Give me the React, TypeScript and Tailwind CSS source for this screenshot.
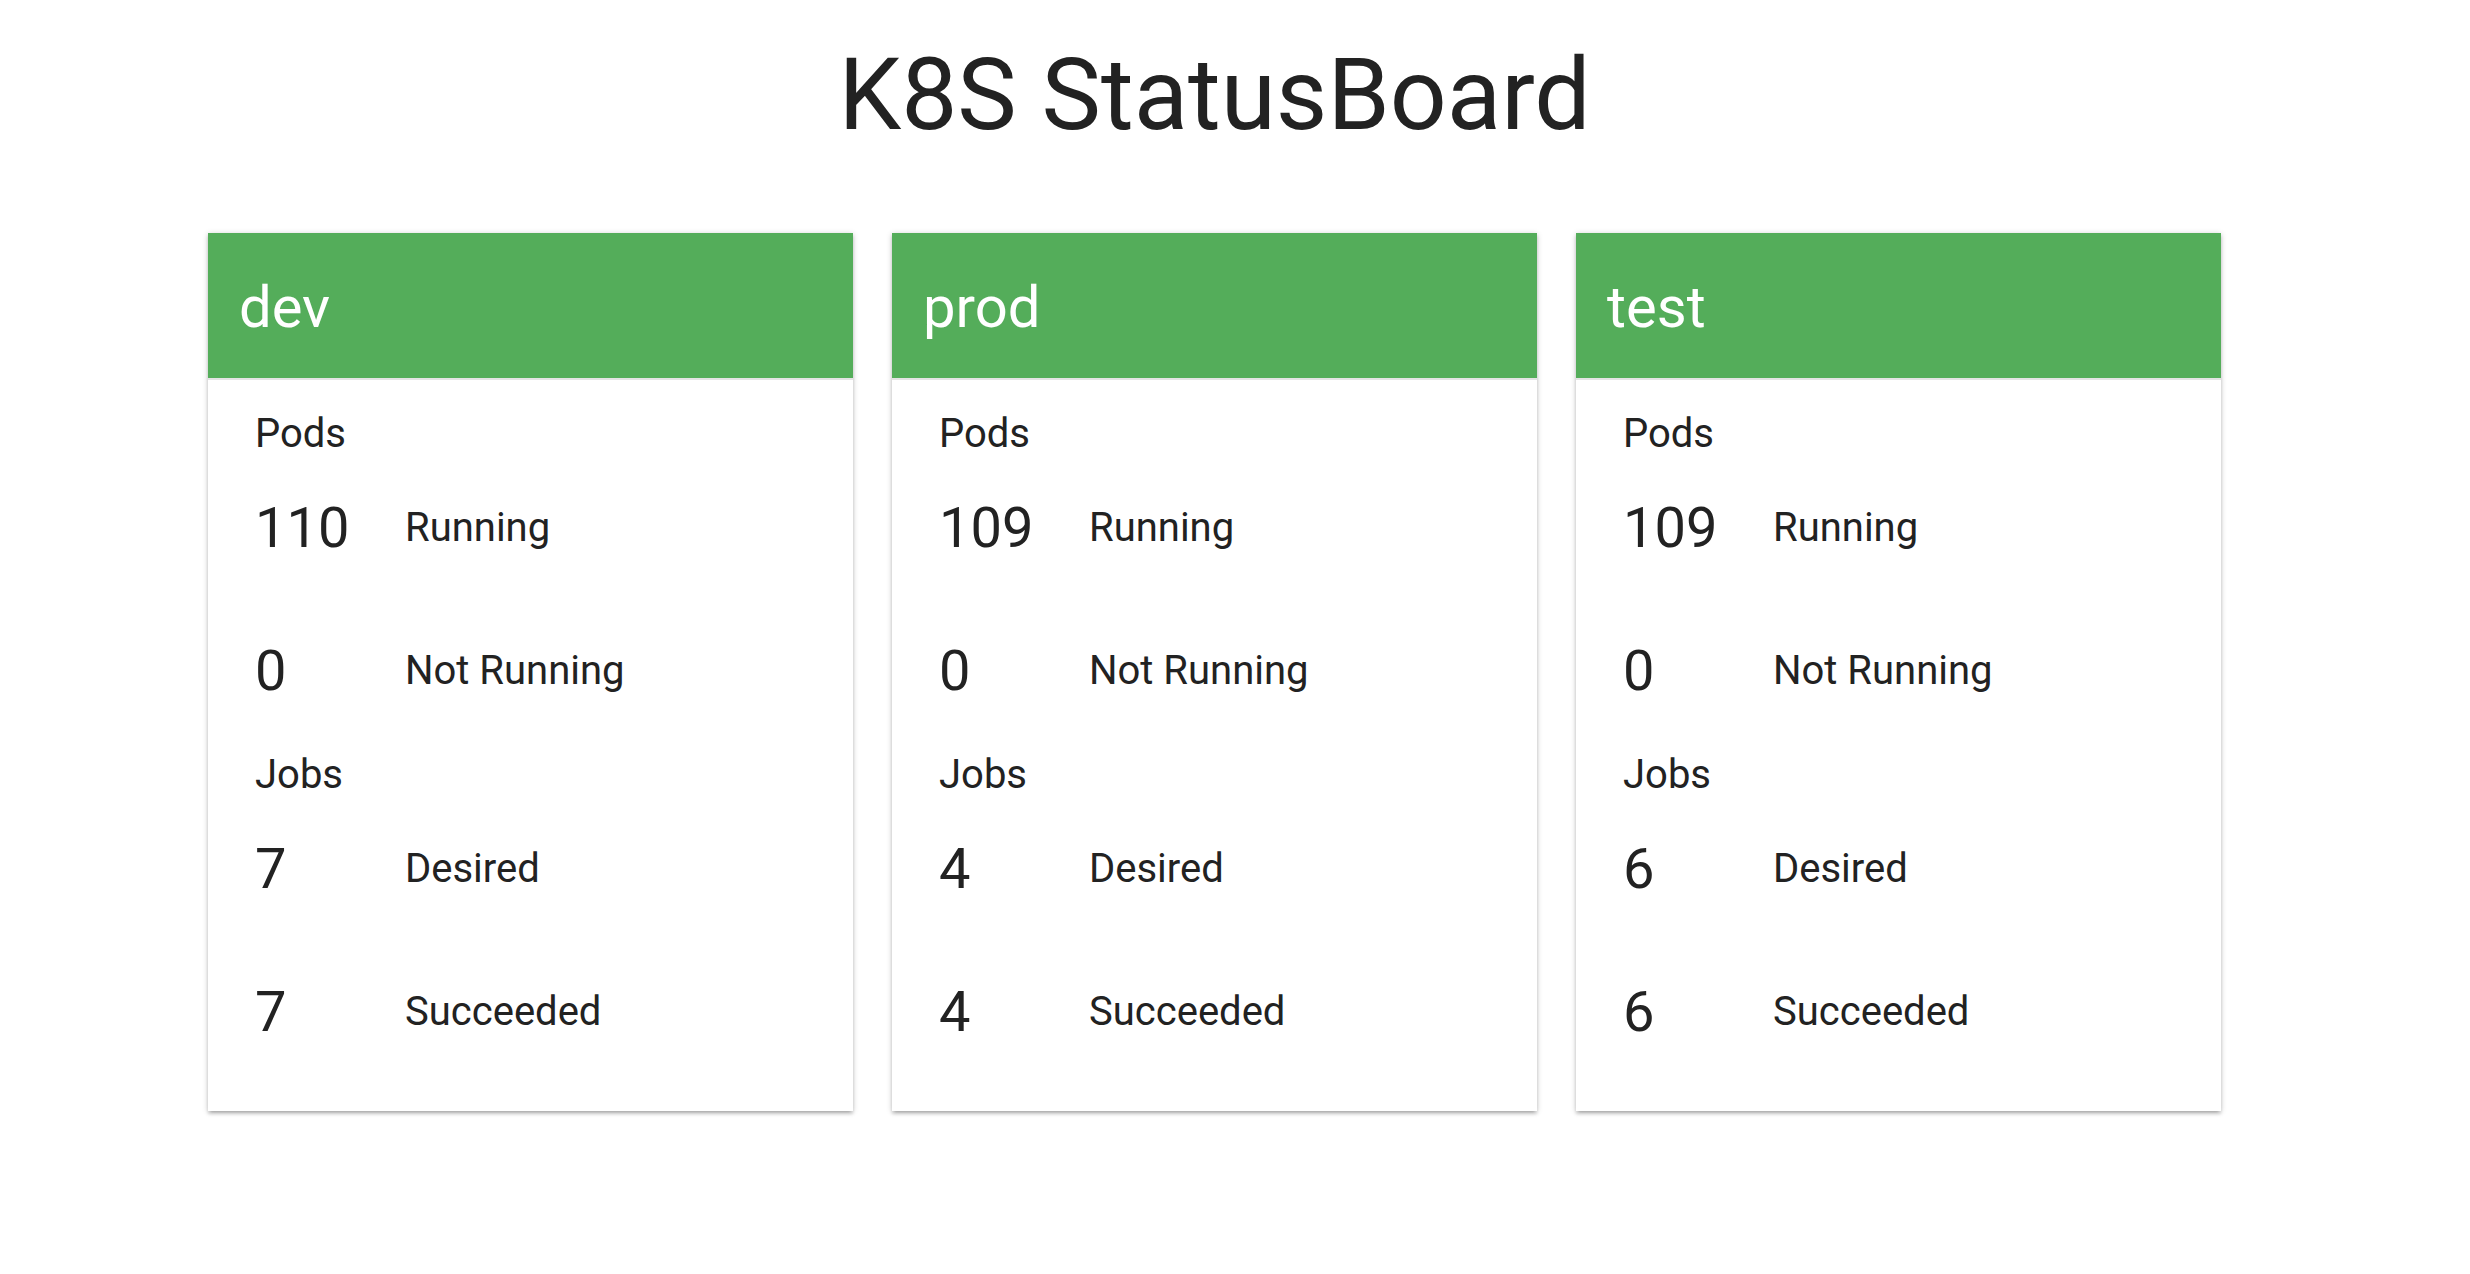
import React from "react";

type Env = { name: string; running: number; notRunning: number; desired: number; succeeded: number };

const envs: Env[] = [
  { name: "dev", running: 110, notRunning: 0, desired: 7, succeeded: 7 },
  { name: "prod", running: 109, notRunning: 0, desired: 4, succeeded: 4 },
  { name: "test", running: 109, notRunning: 0, desired: 6, succeeded: 6 },
];

function Row({ value, label }: { value: number; label: string }) {
  return (
    <div className="flex h-[128px] items-center">
      <div className="w-[150px] text-[56px] leading-none">{value}</div>
      <div className="text-[40px] leading-none">{label}</div>
    </div>
  );
}

function Section({ title, rows }: { title: string; rows: { value: number; label: string }[] }) {
  return (
    <div className="flex flex-col">
      <div className="flex h-[60px] items-center text-[40px] leading-none">{title}</div>
      <div className="flex flex-col gap-[15px]">
        {rows.map((r) => (
          <Row key={r.label} value={r.value} label={r.label} />
        ))}
      </div>
    </div>
  );
}

function Card({ env }: { env: Env }) {
  return (
    <div className="flex flex-col bg-white shadow-[0_3px_3px_0_rgba(0,0,0,0.14),0_4px_2px_-3px_rgba(0,0,0,0.12),0_1px_6px_0_rgba(0,0,0,0.2)]">
      <div className="flex h-[145px] items-center bg-[#54ad5a] pl-[31px] pt-[2px] text-[58px] leading-none text-white">
        {env.name}
      </div>
      <div className="h-[2px] bg-[#e4e4e4]" />
      <div className="flex flex-col gap-[10px] pb-[35px] pl-[47px] pt-[24px] text-[#222222]">
        <Section
          title="Pods"
          rows={[
            { value: env.running, label: "Running" },
            { value: env.notRunning, label: "Not Running" },
          ]}
        />
        <Section
          title="Jobs"
          rows={[
            { value: env.desired, label: "Desired" },
            { value: env.succeeded, label: "Succeeded" },
          ]}
        />
      </div>
    </div>
  );
}

export default function App() {
  return (
    <div
      className="min-h-[1274px] w-[2429px] bg-white text-[#222222]"
      style={{ fontFamily: "Roboto, 'Noto Sans', sans-serif" }}
    >
      <h1 className="pt-[45px] text-center text-[100px] font-normal leading-none text-[#222222]">
        K8S StatusBoard
      </h1>
      <div className="mx-auto mt-[88px] grid w-[2013px] grid-cols-3 gap-[39px]">
        {envs.map((e) => (
          <Card key={e.name} env={e} />
        ))}
      </div>
    </div>
  );
}
